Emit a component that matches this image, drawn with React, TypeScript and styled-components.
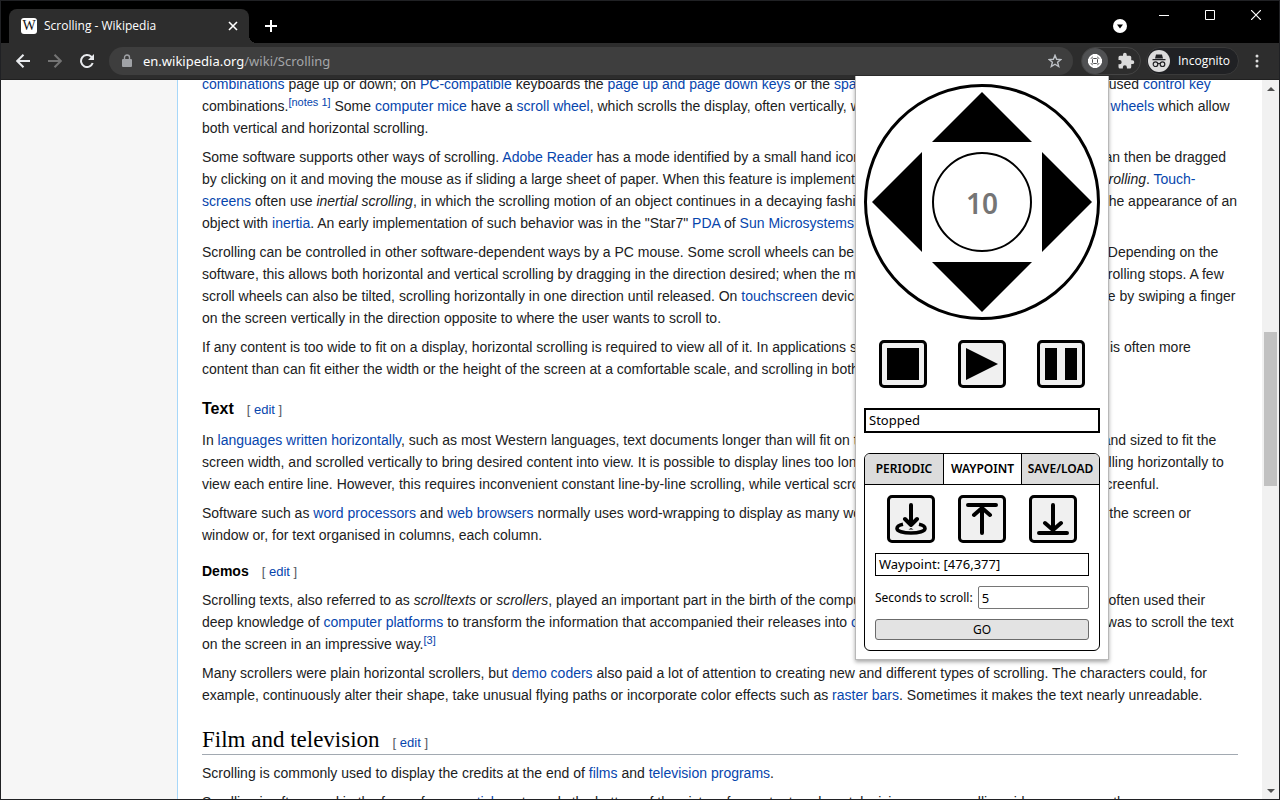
import React from "react";
import styled, { createGlobalStyle, css } from "styled-components";

const GlobalStyle = createGlobalStyle`
  *, *::before, *::after { box-sizing: border-box; }
  body { margin: 0; background: #000; }
  button, input { font: inherit; color: inherit; margin: 0; }
  button { padding: 0; border: 0; background: none; cursor: pointer; }
  svg { display: block; }
`;

const uiFont = `"Noto Sans", "Open Sans", sans-serif`;
const bodyFont = `"Liberation Sans", Arial, sans-serif`;

/* ---------- Browser window ---------- */

const Window = styled.div`
  position: relative;
  display: flex;
  flex-direction: column;
  height: 100vh;
  border: 1px solid #202124;
  background: #000;
  overflow: hidden;
`;

const TabStrip = styled.header`
  display: flex;
  height: 42px;
  flex: none;
  padding-left: 8px;
  color: #fff;
  font: 12px/16px "Open Sans", ${uiFont};
`;

const Tab = styled.div`
  position: relative;
  display: flex;
  align-items: center;
  align-self: flex-end;
  gap: 7px;
  width: 240px;
  height: 34px;
  padding: 0 8px 0 12px;
  border-radius: 8px 8px 0 0;
  background: #2d2d2d;

  &::after {
    content: "";
    position: absolute;
    left: 100%;
    bottom: 0;
    width: 8px;
    height: 8px;
    background: radial-gradient(circle at 100% 0, #000 8px, #2d2d2d 8px);
  }
`;

const Favicon = styled.span`
  display: grid;
  place-items: center;
  width: 16px;
  height: 16px;
  border-radius: 3px;
  background: #fff;
  color: #111;
  font: 14px/16px "Liberation Serif", serif;
`;

const TabTitle = styled.span`
  flex: 1;
  white-space: nowrap;
`;

const GlyphButton = styled.button<{ $w?: number; $h?: number }>`
  display: grid;
  place-items: center;
  flex: none;
  width: ${(p) => p.$w ?? 16}px;
  height: ${(p) => p.$h ?? 16}px;
`;

const NewTab = styled(GlyphButton)`
  align-self: flex-end;
  margin: 0 auto 3px 8px;
`;

const TabSearch = styled(GlyphButton)`
  align-self: flex-end;
  margin: 0 7px 3px 0;
`;

const Toolbar = styled.div`
  display: flex;
  align-items: center;
  flex: none;
  height: 37px;
  padding: 0 8px 0 6px;
  background: #2d2d2d;
  border-bottom: 1px solid #202020;
  color: #e8eaed;
`;

const AddressBar = styled.label`
  display: flex;
  align-items: center;
  flex: 1;
  min-width: 0;
  height: 28px;
  margin: 0 8px 0 6px;
  padding: 0 10px 0 12px;
  border-radius: 14px;
  background: #3e3e3e;
  font: 13px/20px ${uiFont};
  color: #a4a6a9;
`;

const Url = styled.span`
  flex: 1;
  margin-left: 10px;
  white-space: nowrap;

  b {
    font-weight: 400;
    color: #fff;
  }
`;

const Extensions = styled.div`
  display: flex;
  align-items: center;
  gap: 4px;
  width: 60px;
  height: 28px;
  border: 1px solid #444;
  border-radius: 14px;
`;

const ActiveExtension = styled(GlyphButton)`
  border-radius: 50%;
  background: #505153;
`;

const Profile = styled.button`
  display: flex;
  align-items: center;
  gap: 8px;
  width: 93px;
  height: 28px;
  margin: 0 4px 0 5px;
  padding-left: 1px;
  border: 1px solid #3a3a3a;
  border-radius: 14px;
  background: #202124;
  color: #fff;
  font: 12px/16px "Open Sans", ${uiFont};
`;

/* ---------- Page ---------- */

const Viewport = styled.div`
  display: flex;
  flex: 1;
  min-height: 0;
  background: #fff;
`;

const Sidebar = styled.aside`
  flex: none;
  width: 177px;
  background: #f6f6f6;
  border-right: 1px solid #a7d7f9;
`;

const Article = styled.main`
  flex: 1;
  min-width: 0;
  overflow: hidden;
  padding: 0 24px;
  font: 14px/22px ${bodyFont};
  color: #202122;

  a {
    color: #0645ad;
    text-decoration: none;
  }
  sup {
    font-size: 11px;
    line-height: 1;
    vertical-align: 5px;
  }
`;

const Paragraph = styled.p<{ $scrolledOff?: boolean }>`
  margin: ${(p) => (p.$scrolledOff ? "-7px" : "0")} 0 7px;
`;

const headingText = css`
  display: flex;
  align-items: baseline;
  gap: 13px;
  color: #000;
`;

const SectionHeading = styled.h2`
  ${headingText}
  margin: 0 0 7px;
  padding-top: 12px;
  border-bottom: 1px solid #a2a9b1;
  font: 23px/29px "Liberation Serif", Georgia, serif;
`;

const SubHeading = styled.h3`
  ${headingText}
  margin: 0 0 9px;
  padding-top: 10px;
  font: bold 16px/23px ${bodyFont};
`;

const MinorHeading = styled.h4`
  ${headingText}
  margin: 0 0 7px;
  padding-top: 7px;
  font: bold 14px/22px ${bodyFont};
`;

const EditLink = styled.span`
  font: 13px/16px ${bodyFont};
  color: #54595d;
`;

const Scrollbar = styled.div`
  display: grid;
  grid-template-rows: 17px 235fr 154fr 296fr 17px;
  justify-items: center;
  flex: none;
  width: 17px;
  background: #f1f1f1;
  color: #505050;
`;

const Thumb = styled.div`
  grid-row: 3;
  width: 13px;
  background: #c1c1c1;
`;

const ArrowButton = styled.button<{ $down?: boolean }>`
  grid-row: ${(p) => (p.$down ? 5 : 1)};
  display: grid;
  place-items: center;
  width: 17px;
`;

/* ---------- Extension popup ---------- */

const Popup = styled.section`
  position: absolute;
  top: 75px;
  right: 170px;
  display: flex;
  flex-direction: column;
  gap: 20px;
  width: 254px;
  padding: 8px;
  border: 1px solid #b8b8b8;
  border-top: 0;
  background: #fff;
  box-shadow: 0 2px 4px rgba(0, 0, 0, 0.35);
  color: #000;
  font: 13px/17px ${uiFont};
`;

const Pad = styled.div`
  display: grid;
  grid-template: 50px 100px 50px / 50px 100px 50px;
  grid-template-areas: ". up ." "left speed right" ". down .";
  gap: 10px;
  width: 236px;
  padding: 5px;
  border: 3px solid #000;
  border-radius: 50%;
`;

const PadButton = styled.button<{ $area: string }>`
  grid-area: ${(p) => p.$area};
`;

const Speed = styled.input`
  grid-area: speed;
  width: 100px;
  height: 100px;
  padding: 2px 0 0;
  border: 2px solid #000;
  border-radius: 50%;
  background: #fff;
  color: #757575;
  text-align: center;
  font: 600 28px/36px ${uiFont};
`;

const ButtonRow = styled.div`
  display: flex;
  justify-content: space-around;
`;

const IconButton = styled.button`
  display: grid;
  place-items: center;
  width: 48px;
  height: 48px;
  border: 3px solid #000;
  border-radius: 5px;
  background: #f0f0f0;
`;

const Status = styled.output<{ $thin?: boolean }>`
  display: block;
  height: ${(p) => (p.$thin ? 23 : 25)}px;
  padding: 2px 3px;
  border: ${(p) => (p.$thin ? 1 : 2)}px solid #000;
`;

const TabBox = styled.div`
  border: 1px solid #000;
  border-radius: 6px;
  overflow: hidden;
`;

const TabList = styled.div`
  display: grid;
  grid-template-columns: 78px 78px 1fr;
  height: 31px;
  border-bottom: 1px solid #000;
`;

const TabButton = styled.button<{ $active?: boolean }>`
  background: ${(p) => (p.$active ? "#fff" : "#dcdcdc")};
  font: 600 12px/16px ${uiFont};
  white-space: nowrap;

  & + & {
    border-left: 1px solid #000;
  }
`;

const Panel = styled.div`
  display: flex;
  flex-direction: column;
  gap: 10px;
  padding: 10px;
`;

const Field = styled.label`
  display: flex;
  align-items: center;
  gap: 5px;
  white-space: nowrap;
  font-size: 12px;
`;

const NumberInput = styled.input`
  flex: 1;
  min-width: 0;
  height: 23px;
  padding: 0 3px;
  border: 1px solid #767676;
  border-radius: 2px;
  font-size: 13px;
`;

const GoButton = styled.button`
  height: 21px;
  border: 1px solid #6b6b6b;
  border-radius: 3px;
  background: #e3e3e3;
  font-size: 12px;
`;

const A = ({ children }: { children: React.ReactNode }) => <a href="#">{children}</a>;

const Edit = () => (
  <EditLink>
    [ <A>edit</A> ]
  </EditLink>
);

const Triangle = ({ w, h, points }: { w: number; h: number; points: string }) => (
  <svg width={w} height={h} viewBox={`0 0 ${w} ${h}`} fill="currentColor">
    <polygon points={points} />
  </svg>
);

const Glyph = ({ children }: { children: React.ReactNode }) => (
  <svg width="32" height="32" viewBox="0 0 32 32">
    {children}
  </svg>
);

const stroke = {
  fill: "none",
  stroke: "#000",
  strokeWidth: 4,
  strokeLinecap: "round" as const,
  strokeLinejoin: "round" as const,
};

const ScrollerPopup = () => (
  <Popup aria-label="Scroller">
    <Pad>
      <PadButton $area="up" aria-label="Scroll up">
        <Triangle w={100} h={50} points="50,0 100,50 0,50" />
      </PadButton>
      <PadButton $area="left" aria-label="Scroll left">
        <Triangle w={50} h={100} points="0,50 50,0 50,100" />
      </PadButton>
      <Speed aria-label="Speed" defaultValue="10" />
      <PadButton $area="right" aria-label="Scroll right">
        <Triangle w={50} h={100} points="50,50 0,0 0,100" />
      </PadButton>
      <PadButton $area="down" aria-label="Scroll down">
        <Triangle w={100} h={50} points="50,50 0,0 100,0" />
      </PadButton>
    </Pad>
    <ButtonRow>
      <IconButton aria-label="Stop">
        <Glyph><rect width="32" height="32" /></Glyph>
      </IconButton>
      <IconButton aria-label="Play">
        <Glyph><path d="M0 0 32 16 0 32z" /></Glyph>
      </IconButton>
      <IconButton aria-label="Pause">
        <Glyph><path d="M0 0h12v32H0zM20 0h12v32H20z" /></Glyph>
      </IconButton>
    </ButtonRow>
    <Status>Stopped</Status>
    <TabBox>
      <TabList role="tablist">
        <TabButton role="tab">PERIODIC</TabButton>
        <TabButton role="tab" $active aria-selected>WAYPOINT</TabButton>
        <TabButton role="tab">SAVE/LOAD</TabButton>
      </TabList>
      <Panel>
        <ButtonRow>
          <IconButton aria-label="Set waypoint">
            <Glyph>
              <path {...stroke} d="M16 2v20M10 16l6 6 6-6" />
              <path {...stroke} strokeWidth={3.6} strokeLinecap="butt" d="M8 21.2C4 22 2 23.6 2 25.4c0 2.600 6 4.600 14 4.600s14-2 14-4.600c0-1.800-2-3.400-6-4.200" />
              <path d="M13.500 26.500 16 25l2.500 1.500z" />
            </Glyph>
          </IconButton>
          <IconButton aria-label="Waypoint to top">
            <Glyph><path {...stroke} d="M2 2h28M16 30V6M8 12l8-7 8 7" /></Glyph>
          </IconButton>
          <IconButton aria-label="Waypoint to bottom">
            <Glyph><path {...stroke} d="M2 30h28M16 2v24M8 20l8 7 8-7" /></Glyph>
          </IconButton>
        </ButtonRow>
        <Status $thin>Waypoint: [476,377]</Status>
        <Field>
          Seconds to scroll:
          <NumberInput defaultValue="5" />
        </Field>
        <GoButton>GO</GoButton>
      </Panel>
    </TabBox>
  </Popup>
);

const WikiArticle = () => (
  <Article>
    <Paragraph $scrolledOff>
      <A>combinations</A> page up or down; on <A>PC-compatible</A> keyboards the <A>page up and page down keys</A> or the{" "}
      <A>space bar</A> are used; earlier computers often used <A>control key</A> combinations.<sup><A>[notes 1]</A></sup> Some{" "}
      <A>computer mice</A> have a <A>scroll wheel</A>, which scrolls the display, often vertically, when rolled; others have
      scroll balls or tilt <A>wheels</A> which allow both vertical and horizontal scrolling.
    </Paragraph>
    <Paragraph>
      Some software supports other ways of scrolling. <A>Adobe Reader</A> has a mode identified by a small hand icon ("hand
      tool") on the document, which can then be dragged by clicking on it and moving the mouse as if sliding a large sheet of
      paper. When this feature is implemented on a touchscreen it is called <i>kinetic scrolling</i>. <A>Touch-screens</A> often
      use <i>inertial scrolling</i>, in which the scrolling motion of an object continues in a decaying fashion after release of
      the touch, simulating the appearance of an object with <A>inertia</A>. An early implementation of such behavior was in the
      "Star7" <A>PDA</A> of <A>Sun Microsystems</A> ca. 1991–1992.
    </Paragraph>
    <Paragraph>
      Scrolling can be controlled in other software-dependent ways by a PC mouse. Some scroll wheels can be pressed down,
      functioning like a button. Depending on the software, this allows both horizontal and vertical scrolling by dragging in
      the direction desired; when the mouse is moved to the original position, scrolling stops. A few scroll wheels can also be
      tilted, scrolling horizontally in one direction until released. On <A>touchscreen</A> devices, scrolling is a multi-touch
      gesture, done by swiping a finger on the screen vertically in the direction opposite to where the user wants to scroll to.
    </Paragraph>
    <Paragraph>
      If any content is too wide to fit on a display, horizontal scrolling is required to view all of it. In applications such
      as graphics and spreadsheets there is often more content than can fit either the width or the height of the screen at a
      comfortable scale, and scrolling in both directions is necessary.
    </Paragraph>
    <SubHeading>Text <Edit /></SubHeading>
    <Paragraph>
      In <A>languages written horizontally</A>, such as most Western languages, text documents longer than will fit on the
      screen are often displayed wrapped and sized to fit the screen width, and scrolled vertically to bring desired content
      into view. It is possible to display lines too long to fit the display without wrapping, scrolling horizontally to view
      each entire line. However, this requires inconvenient constant line-by-line scrolling, while vertical scrolling is only
      needed after reading a full screenful.
    </Paragraph>
    <Paragraph>
      Software such as <A>word processors</A> and <A>web browsers</A> normally uses word-wrapping to display as many words in a
      single line as will fit the width of the screen or window or, for text organised in columns, each column.
    </Paragraph>
    <MinorHeading>Demos <Edit /></MinorHeading>
    <Paragraph>
      Scrolling texts, also referred to as <i>scrolltexts</i> or <i>scrollers</i>, played an important part in the birth of the
      computer demo subculture. Software crackers often used their deep knowledge of <A>computer platforms</A> to transform the
      information that accompanied their releases into <A>crack intros</A>. The sole role of these intros was to scroll the text
      on the screen in an impressive way.<sup><A>[3]</A></sup>
    </Paragraph>
    <Paragraph>
      Many scrollers were plain horizontal scrollers, but <A>demo coders</A> also paid a lot of attention to creating new and
      different types of scrolling. The characters could, for example, continuously alter their shape, take unusual flying paths
      or incorporate color effects such as <A>raster bars</A>. Sometimes it makes the text nearly unreadable.
    </Paragraph>
    <SectionHeading>Film and television <Edit /></SectionHeading>
    <Paragraph>
      Scrolling is commonly used to display the credits at the end of <A>films</A> and <A>television programs</A>.
    </Paragraph>
    <Paragraph>
      Scrolling is often used in the form of a <A>news ticker</A> at nearly the bottom of the picture for content such as
      television news, scrolling sideways across the screen.
    </Paragraph>
  </Article>
);

export default function App() {
  return (
    <>
      <GlobalStyle />
      <Window>
        <TabStrip>
          <Tab>
            <Favicon>W</Favicon>
            <TabTitle>Scrolling - Wikipedia</TabTitle>
            <GlyphButton aria-label="Close tab">
              <svg width="10" height="10" viewBox="0 0 10 10" stroke="#fff" strokeWidth="1.6">
                <path d="M1 1l8 8M9 1l-8 8" />
              </svg>
            </GlyphButton>
          </Tab>
          <NewTab $w={28} $h={28} aria-label="New tab">
            <svg width="12" height="12" viewBox="0 0 12 12" stroke="#fff" strokeWidth="2">
              <path d="M6 0v12M0 6h12" />
            </svg>
          </NewTab>
          <TabSearch $w={28} $h={28} aria-label="Search tabs">
            <svg width="14" height="14" viewBox="0 0 14 14">
              <circle cx="7" cy="7" r="7" fill="#fff" />
              <path d="M4 5.500h6L7 9.500z" fill="#000" />
            </svg>
          </TabSearch>
          <GlyphButton $w={46} $h={28} aria-label="Minimize">
            <svg width="10" height="10" viewBox="0 0 10 10"><path d="M0 5h10v1H0z" fill="#fff" /></svg>
          </GlyphButton>
          <GlyphButton $w={46} $h={28} aria-label="Maximize">
            <svg width="10" height="10" viewBox="0 0 10 10"><path d="M.5.5h9v9h-9z" fill="none" stroke="#fff" /></svg>
          </GlyphButton>
          <GlyphButton $w={46} $h={28} aria-label="Close window">
            <svg width="10" height="10" viewBox="0 0 10 10"><path d="M0 0l10 10M10 0L0 10" stroke="#fff" strokeWidth="1.200" /></svg>
          </GlyphButton>
        </TabStrip>
        <Toolbar>
          <GlyphButton $w={32} $h={28} aria-label="Back">
            <svg width="14" height="14" viewBox="0 0 14 14" fill="none" stroke="#e8eaed" strokeWidth="2"><path d="M14 7H1.500M7.500.7 1.200 7l6.300 6.300" /></svg>
          </GlyphButton>
          <GlyphButton $w={32} $h={28} aria-label="Forward">
            <svg width="14" height="14" viewBox="0 0 14 14" fill="none" stroke="#747474" strokeWidth="2"><path d="M0 7h12.500M6.500.7 12.800 7l-6.300 6.300" /></svg>
          </GlyphButton>
          <GlyphButton $w={32} $h={28} aria-label="Reload">
            <svg width="14" height="14" viewBox="0 0 14 14" fill="none" stroke="#e8eaed" strokeWidth="2"><path d="M12.700 9A6 6 0 1 1 11.300 2.800L13 4.500" /><path d="M14 0v6H8z" fill="#e8eaed" stroke="none" /></svg>
          </GlyphButton>
          <AddressBar>
            <svg width="12" height="14" viewBox="0 0 12 14"><rect x="1" y="5" width="10" height="8" rx="1" fill="#a0a2a6" /><path d="M3.500 6V3.500a2.500 2.500 0 0 1 5 0V6" fill="none" stroke="#a0a2a6" strokeWidth="1.400" /></svg>
            <Url><b>en.wikipedia.org</b>/wiki/Scrolling</Url>
            <GlyphButton aria-label="Bookmark this page">
              <svg width="14" height="14" viewBox="0 0 14 14"><path d="M7 1.300l1.600 4 4.300.3-3.300 2.700 1.100 4.200L7 10.200l-3.700 2.300 1.100-4.200L1.100 5.600l4.300-.3z" fill="none" stroke="#bdc1c6" strokeWidth="1.400" /></svg>
            </GlyphButton>
          </AddressBar>
          <Extensions>
            <ActiveExtension $w={26} $h={26} aria-label="Scroller extension">
              <svg width="14" height="14" viewBox="0 0 14 14">
                <circle cx="7" cy="7" r="6" fill="none" stroke="#fff" strokeWidth="2" />
                <path d="M5 0h4v14H5zM0 5h14v4H0z" fill="#fff" />
                <rect x="3.500" y="3.500" width="7" height="7" rx="1" fill="#fff" />
                <rect x="4.500" y="4.500" width="5" height="5" rx="1" fill="none" stroke="#505153" />
              </svg>
            </ActiveExtension>
            <GlyphButton $w={28} $h={26} aria-label="Extensions">
              <svg width="18" height="18" viewBox="0 0 24 24"><path fill="#dcdcdc" d="M20.500 11H19V7a2 2 0 0 0-2-2h-4V3.500a2.500 2.500 0 0 0-5 0V5H4a2 2 0 0 0-2 2v3.800h1.500a2.700 2.700 0 0 1 0 5.400H2V20a2 2 0 0 0 2 2h3.800v-1.500a2.700 2.700 0 0 1 5.400 0V22H17a2 2 0 0 0 2-2v-4h1.500a2.500 2.500 0 0 0 0-5z" /></svg>
            </GlyphButton>
          </Extensions>
          <Profile>
            <svg width="22" height="22" viewBox="0 0 22 22">
              <circle cx="11" cy="11" r="11" fill="#dcdcdc" />
              <path d="M8 4.500h6l1 4H7zM4.500 9h13v1.300h-13z" fill="#202124" />
              <g fill="none" stroke="#202124" strokeWidth="1.200"><circle cx="7.500" cy="14.200" r="2.300" /><circle cx="14.500" cy="14.200" r="2.300" /><path d="M9.800 13.800q1.200-.8 2.400 0" /></g>
            </svg>
            Incognito
          </Profile>
          <GlyphButton $w={28} $h={28} aria-label="Menu">
            <svg width="4" height="14" viewBox="0 0 4 14" fill="#dcdcdc"><circle cx="2" cy="2" r="1.500" /><circle cx="2" cy="7" r="1.500" /><circle cx="2" cy="12" r="1.500" /></svg>
          </GlyphButton>
        </Toolbar>
        <Viewport>
          <Sidebar />
          <WikiArticle />
          <Scrollbar>
            <ArrowButton aria-label="Scroll page up"><Triangle w={8} h={4} points="4,0 8,4 0,4" /></ArrowButton>
            <Thumb />
            <ArrowButton $down aria-label="Scroll page down"><Triangle w={8} h={4} points="4,4 0,0 8,0" /></ArrowButton>
          </Scrollbar>
        </Viewport>
        <ScrollerPopup />
      </Window>
    </>
  );
}
